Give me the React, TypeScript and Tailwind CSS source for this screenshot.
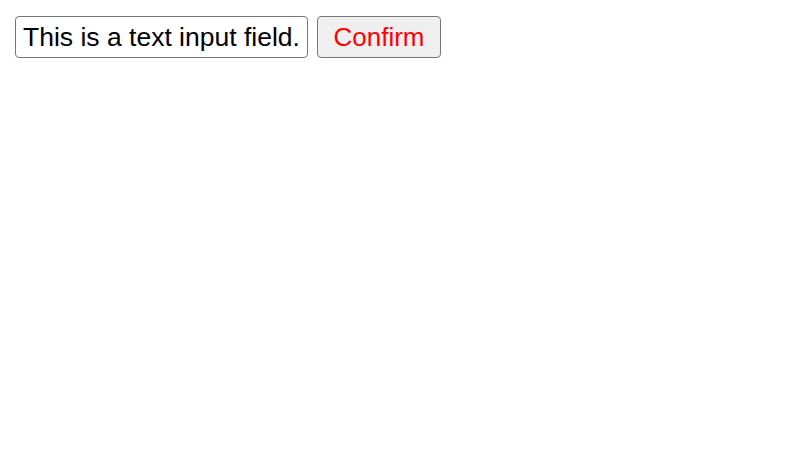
export default function App() {
  return (
    <div className="min-h-screen bg-white p-[15px] pt-4 font-['Liberation_Sans',Arial,sans-serif]">
      <div className="flex items-center gap-[9px]">
        <input
          type="text"
          defaultValue="This is a text input field."
          className="h-[42px] w-[293px] rounded-[4px] border border-[#767676] bg-white px-[7px] text-[26.5px] text-black outline-none"
        />
        <button className="h-[42px] w-[124px] rounded-[4px] border border-[#767676] bg-[#efefef] text-[26px] text-[#ff0000]">
          Confirm
        </button>
      </div>
    </div>
  );
}
